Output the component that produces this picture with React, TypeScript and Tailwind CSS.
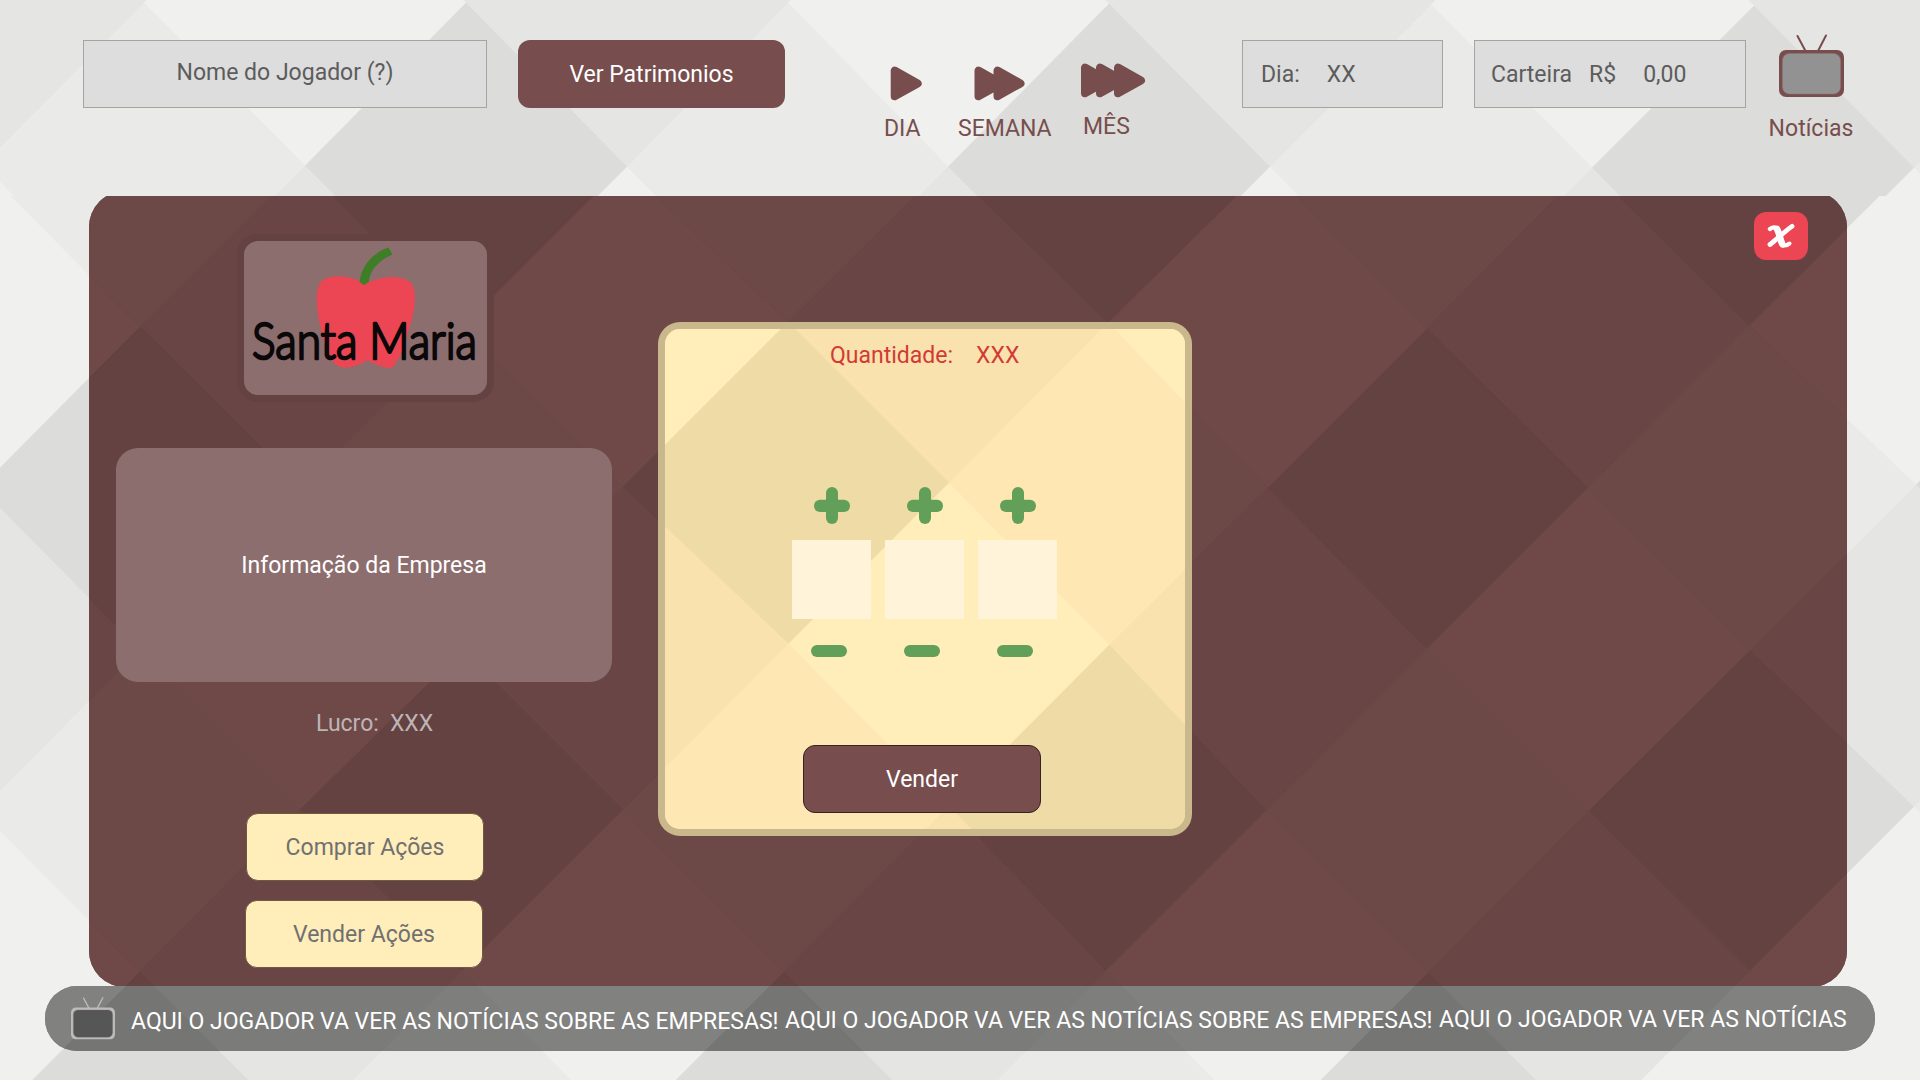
import type { ReactNode } from "react";

type Palette = { light: string; soft: string; mid: string; dark: string };
type Shade = keyof Palette;
type Point = [number, number];

const GRAY: Palette = { light: "#f0f0ee", soft: "#eaeae8", mid: "#e5e5e3", dark: "#dcdcda" };
const WINE: Palette = { light: "#6f4848", soft: "#6c4946", mid: "#694545", dark: "#644241" };
const CREAM: Palette = { light: "#ffedba", soft: "#ffe7b3", mid: "#fae2ae", dark: "#efdba5" };
const SMOKE: Palette = { light: "#81817f", soft: "#7e7e7d", mid: "#7b7b79", dark: "#757573" };

// Corner points of the argyle lattice, one array for each row.
const BODY_ROWS: Point[][] = [
  [[-180, 4], [141, 4], [463, 4], [786, 3], [1107, 4], [1429, 4], [1751, 4], [2073, 4]],
  [[-20, 165], [302, 165], [624, 166], [947, 165], [1267, 166], [1588, 166], [1911, 165]],
  [[-180, 327], [140, 327], [463, 327], [788, 322], [1108, 323], [1427, 329], [1749, 326], [2073, 326]],
  [[-20, 488], [302, 488], [623, 487], [949, 483], [1268, 488], [1588, 488], [1916, 485]],
  [[-180, 650], [140, 650], [463, 650], [788.5, 644], [1109.5, 645], [1427, 649], [1750, 651], [2073, 649]],
  [[-20, 811], [300, 810], [623, 810], [949, 806], [1266, 811], [1589, 811], [1914, 807]],
  [[-180, 972], [140, 972], [462, 971], [784, 972], [1106, 971], [1428, 973], [1750, 971], [2073, 971]],
  [[-20, 1133], [301, 1133], [623, 1133], [945, 1133], [1267, 1134], [1589, 1133], [1911, 1133]],
  [[-180, 1294], [140, 1294], [462, 1294], [784, 1294], [1106, 1294], [1428, 1294], [1750, 1294], [2073, 1294]],
];

const HEADER_ROWS: Point[][] = [
  [[-178, 3], [144, 3], [466, 3], [788, 3], [1109, 4], [1431, 5], [1754, 6], [2076, 6]],
  [[-17, 165], [305, 166], [627, 167], [948, 167], [1270, 167], [1592, 168], [1914, 168]],
  [[-178, 327], [144, 327], [466, 328], [788, 328], [1109, 329], [1431, 329], [1753, 330], [2075, 330]],
];

const cellShade = (row: number, col: number): Shade => {
  if (row % 2 === 1) {
    if (row === 7 && col === 6) return "light";
    const even = col % 2 === 0;
    return (row % 4 === 1 ? even : !even) ? "dark" : "soft";
  }
  const even = col % 2 === 0;
  return (row % 4 === 0 ? even : !even) ? "mid" : "light";
};

function Argyle({ rows, palette, box }: { rows: Point[][]; palette: Palette; box: [number, number, number, number] }) {
  const cells: ReactNode[] = [];
  for (let r = 0; r < rows.length; r++) {
    const count = r % 2 === 1 ? 8 : 7;
    for (let c = 0; c < count; c++) {
      const odd = r % 2 === 1;
      const side = rows[r];
      const left: Point = odd ? side[c - 1] ?? [-340, side[0][1]] : side[c];
      const right: Point = odd ? side[c] ?? [2240, side[6][1]] : side[c + 1];
      const midX = (left[0] + right[0]) / 2;
      const midY = (left[1] + right[1]) / 2;
      const top: Point = rows[r - 1]?.[c] ?? [midX, midY - 161];
      const bottom: Point = rows[r + 1]?.[c] ?? [midX, midY + 161];
      const fill = palette[cellShade(r, c)];
      cells.push(
        <polygon key={`${r}-${c}`} points={[top, right, bottom, left].map((p) => p.join(",")).join(" ")} fill={fill} stroke={fill} strokeWidth={0.6} />,
      );
    }
  }
  return (
    <svg className="absolute inset-0 h-full w-full" viewBox={box.join(" ")} preserveAspectRatio="none" aria-hidden="true">
      <rect x={box[0]} y={box[1]} width={box[2]} height={box[3]} fill={palette.mid} />
      {cells}
    </svg>
  );
}

function Play({ starts, width, label, labelClass, className }: { starts: number[]; width: number; label: string; labelClass: string; className: string }) {
  return (
    <button className={`flex flex-col items-start ${className}`}>
      <svg className="overflow-visible" width={width} height="35" viewBox={`0 0 ${width} 35`} fill="#774e4d" stroke="#774e4d" strokeWidth="8" strokeLinejoin="round">
        {starts.map((x) => (
          <path key={x} d={`M${x + 4} 4.6 L${x + 4} 30.2 L${x + 27} 17.4 Z`} />
        ))}
      </svg>
      <span className={`whitespace-nowrap leading-7 text-[#774e4d] ${labelClass}`}>{label}</span>
    </button>
  );
}

function Television({ width, height, frame, screen }: { width: number; height: number; frame: string; screen: string }) {
  return (
    <svg width={width} height={height} viewBox="0 0 65 63">
      <path d="M18.5 2 L26.5 17 M47 1.5 L39 17" stroke={frame} strokeWidth="2" strokeLinecap="round" />
      <rect x="0" y="16" width="65" height="47" rx="7" fill={frame} />
      <rect x="3.5" y="19.5" width="58" height="40.5" rx="7" fill={screen} stroke="#8d7473" strokeOpacity="0.5" strokeWidth="1" />
    </svg>
  );
}

function Header() {
  return (
    <header className="relative h-[196px] overflow-hidden">
      <Argyle rows={HEADER_ROWS} palette={GRAY} box={[0, 0, 1920, 196]} />
      <div className="relative flex items-start pl-[83px]">
        <div className="mt-10 flex h-[68px] w-[404px] items-center justify-center border border-[#a4a4a0] bg-[#dddddd] pb-0.5 text-[#5c5c5c]">Nome do Jogador (?)</div>
        <button className="mt-10 ml-[31px] flex h-[68px] w-[267px] items-center justify-center rounded-xl bg-[#774e4d] pt-0.5 text-white">Ver Patrimonios</button>
        <Play className="mt-[66px] ml-[99px] w-[44px]" starts={[6.7]} width={44} label="DIA" labelClass="mt-[14px]" />
        <Play className="mt-[66px] ml-[30px] w-[94px]" starts={[16.5, 35.5]} width={94} label="SEMANA" labelClass="mt-[14px]" />
        <Play className="mt-[63px] ml-[31px] w-[70px]" starts={[-2, 13, 31]} width={70} label="MÊS" labelClass="mt-[15px]" />
        <div className="mt-10 ml-[89px] flex h-[68px] w-[201px] items-center gap-[27px] border border-[#a4a4a0] bg-[#dddddd] pt-0.5 pl-[18px] text-[#5c5c5c]">
          <span>Dia:</span>
          <span>XX</span>
        </div>
        <div className="mt-10 ml-[31px] flex h-[68px] w-[272px] items-center border border-[#a4a4a0] bg-[#dddddd] pt-0.5 pl-4 text-[#5c5c5c]">
          <span>Carteira</span>
          <span className="ml-[17px]">R$</span>
          <span className="ml-[27px]">0,00</span>
        </div>
        <button className="mt-[34px] ml-[21px] flex w-[88px] flex-col items-center text-[#774e4d]">
          <Television width={65} height={63} frame="#774e4d" screen="#929292" />
          <span className="mt-[18px] leading-7">Notícias</span>
        </button>
      </div>
    </header>
  );
}

function CompanyLogo() {
  return (
    <div className="ml-[148px] h-[168px] w-[257px] shrink-0 rounded-[21px] border-[7px] border-[#644241] bg-[#8d6e6e]">
      <svg className="overflow-visible" width="243" height="154" viewBox="244 241 243 154">
        <path
          d="M364 285 C356 276 332 273 322 281 C315 287 316 304 319 320 C323 342 329 361 338 366 C347 370 358 366 368 360 C377 366 387 369 392 367.500 C400 362 408 335 413 315 C416 300 416 287 410 282 C400 274 378 276 364 285 Z"
          fill="#ec4553"
        />
        <path d="M364 285 L359.600 282 C361 267 372 253 388.500 247.500 L392.500 254.500 C378 261 370 270 368.700 282 Z" fill="#3f7d27" />
        <text x="252" y="358.500" textLength="225" lengthAdjust="spacingAndGlyphs" fontFamily="Lato, sans-serif" fontWeight="300" fontSize="51" fill="#0a0809" stroke="#0a0809" strokeWidth="2.600" strokeLinejoin="round">
          Santa Maria
        </text>
      </svg>
    </div>
  );
}

function Sidebar() {
  return (
    <aside className="flex w-[523px] flex-col pt-[38px]">
      <CompanyLogo />
      <div className="mt-[46px] ml-[27px] flex h-[234px] w-[496px] shrink-0 items-center justify-center rounded-[22px] bg-[#8d6e6e] pt-0.5 text-white">Informação da Empresa</div>
      <p className="mt-7 ml-[227px] flex gap-[11px] leading-7 text-[#bdb5b5]">
        <span>Lucro:</span>
        <span>XXX</span>
      </p>
      <button className="mt-[75px] ml-[157px] flex h-[68px] w-[238px] items-center justify-center rounded-xl border border-[#6f5b42] bg-[#ffedba] pt-0.5 text-[#707070]">Comprar Ações</button>
      <button className="mt-[19px] ml-[156px] flex h-[68px] w-[238px] items-center justify-center rounded-xl border border-[#6f5b42] bg-[#ffedba] pt-0.5 text-[#707070]">Vender Ações</button>
    </aside>
  );
}

function Digit() {
  return (
    <div className="flex w-[79px] flex-col items-center">
      <button aria-label="+" className="ml-px">
        <svg width="36" height="37" viewBox="0 0 36 37" fill="#629f59">
          <rect x="12" y="0" width="12" height="37" rx="6" />
          <rect x="0" y="12.700" width="36" height="12.300" rx="6" />
        </svg>
      </button>
      <div className="mt-4 h-[79px] w-[79px] bg-[#fff4d9]" />
      <button aria-label="-" className="mt-[26px] mr-[5px] h-3 w-9 rounded-full bg-[#629f59]" />
    </div>
  );
}

function SellDialog() {
  return (
    <section className="relative mt-[126px] ml-[46px] h-[514px] w-[534px] overflow-hidden rounded-[22px] bg-[#cab88d] p-[7px]">
      <div className="relative h-full overflow-hidden rounded-[15px]">
        <Argyle rows={BODY_ROWS} palette={CREAM} box={[665, 329, 520, 500]} />
        <div className="relative flex h-full flex-col">
          <p className="mt-[13px] ml-[165px] flex gap-[23px] leading-7 text-[#d23a35]">
            <span>Quantidade:</span>
            <span>XXX</span>
          </p>
          <div className="mt-[117px] ml-[127px] flex gap-[14px]">
            <Digit />
            <Digit />
            <Digit />
          </div>
          <button className="mt-[88px] ml-[138px] flex h-[68px] w-[238px] items-center justify-center rounded-xl border border-[#352223] bg-[#774e4d] pt-0.5 text-white">Vender</button>
        </div>
      </div>
    </section>
  );
}

function CompanyPanel() {
  return (
    <main className="relative ml-[89px] h-[790px] w-[1758px] overflow-hidden">
      <div className="relative -mt-[5px] h-[796px] overflow-hidden rounded-[36px]">
        <Argyle rows={BODY_ROWS} palette={WINE} box={[89, 191, 1758, 796]} />
        <div className="relative flex pt-[5px]">
          <Sidebar />
          <SellDialog />
          <button aria-label="x" className="mt-4 mr-[39px] ml-auto flex h-12 w-[54px] items-center justify-center rounded-xl bg-[#ec4553]">
            <svg width="28" height="26" viewBox="0 0 28 26" fill="none" stroke="#fff" strokeLinecap="round" strokeLinejoin="round">
              <path d="M3 21.500 C9 17 17 9 25 3.400" strokeWidth="4.800" />
              <path d="M3 6 C6.500 3.500 9 3.800 11 7" strokeWidth="4.400" />
              <path d="M10 6 C12.500 10 13 17 15.500 21.300" strokeWidth="6.600" />
              <path d="M15.500 22.300 C18.500 22.800 21 22 22.500 20.500" strokeWidth="4" />
            </svg>
          </button>
        </div>
      </div>
    </main>
  );
}

function NewsTicker() {
  const headline = "AQUI O JOGADOR VA VER AS NOTÍCIAS SOBRE AS EMPRESAS!";
  return (
    <footer className="relative ml-[45px] h-[65px] w-[1830px] overflow-hidden rounded-[32px]">
      <Argyle rows={BODY_ROWS} palette={SMOKE} box={[45, 986, 1830, 65]} />
      <div className="relative flex items-start pl-[26px] whitespace-nowrap text-white">
        <div className="mt-[10px] w-11">
          <Television width={44} height={44} frame="#bcbcbc" screen="#565656" />
        </div>
        <span className="mt-[22px] ml-4 w-[654px] leading-7">{headline}</span>
        <span className="mt-[21px] w-[654px] leading-7">{headline}</span>
        <span className="mt-5 leading-7">AQUI O JOGADOR VA VER AS NOTÍCIAS</span>
      </div>
    </footer>
  );
}

export default function App() {
  return (
    <div className="relative h-[1080px] w-[1920px] overflow-hidden font-[Roboto,sans-serif] text-[23px]">
      <Argyle rows={BODY_ROWS} palette={GRAY} box={[0, 0, 1920, 1080]} />
      <Header />
      <CompanyPanel />
      <NewsTicker />
    </div>
  );
}
